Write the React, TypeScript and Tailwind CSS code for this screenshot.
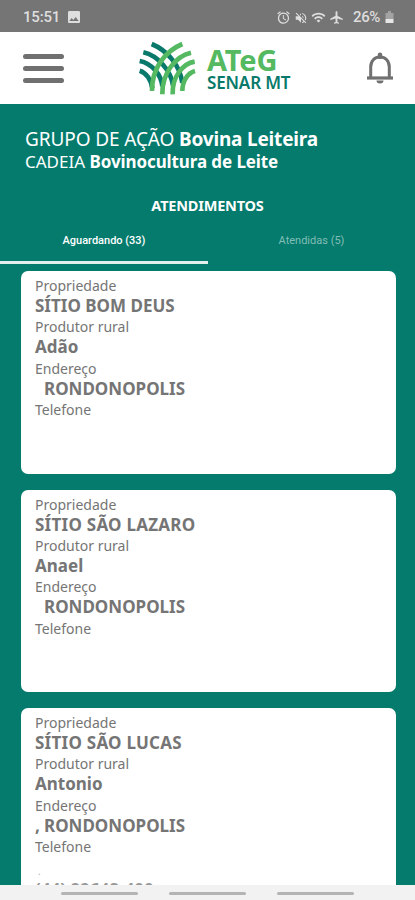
import {
	MdAirplanemodeActive,
	MdAlarm,
	MdImage,
	MdVolumeOff,
	MdWifi,
} from "react-icons/md";

type Visit = {
	property: string;
	producer: string;
	prefix: string;
	city: string;
	phone?: string;
};

const visits: Visit[] = [
	{
		property: "SÍTIO BOM DEUS",
		producer: "Adão",
		prefix: "",
		city: "RONDONOPOLIS",
	},
	{
		property: "SÍTIO SÃO LAZARO",
		producer: "Anael",
		prefix: "",
		city: "RONDONOPOLIS",
	},
	{
		property: "SÍTIO SÃO LUCAS",
		producer: "Antonio",
		prefix: ",",
		city: "RONDONOPOLIS",
		phone: "(44) 99648-400",
	},
];

const StatusBar = () => {
	return (
		<div className="flex h-8 shrink-0 items-center bg-[#757575] pt-[3px] pl-[23px] font-[Roboto,sans-serif] text-[15px] font-medium text-[#dedede]">
			<span className="w-[43px] tracking-[-0.2px]">15:51</span>
			<MdImage className="mb-[2px] h-[16px] w-[16px]" />
			<div className="ml-[194px] flex items-center">
				<MdAlarm className="h-[15px] w-[15px]" />
				<MdVolumeOff className="ml-[3px] h-[14px] w-[14px]" />
				<MdWifi className="ml-[3px] h-[15px] w-[15px]" />
				<MdAirplanemodeActive className="ml-[3px] h-[15px] w-[15px]" />
			</div>
			<span className="ml-[9px] w-[32px] tracking-[-0.4px]">26%</span>
			<svg className="mb-[2px] h-[12px] w-[9px]" viewBox="0 0 9 12">
				<path d="M3 0h3v2h2.500v6H.5V2H3z" fill="#a3a3a3" />
				<path d="M.5 8h8v4h-8z" fill="#e6e6e6" />
			</svg>
		</div>
	);
};

const Logo = () => {
	return (
		<svg
			className="h-[55px] w-[58px]"
			viewBox="25 16 174 165"
			fill="none"
			strokeWidth="14"
		>
			<g stroke="#08796a">
				<path d="M66 25C112 44 151 88 158 142" />
				<path d="M41 50C84 60 124 104 130 150" />
				<path d="M30 76C66 83 95 117 98 152" />
				<path d="M30 105C50 111 65 133 68 158" />
			</g>
			<g stroke="#55b961">
				<path d="M158 25C108 46 66 96 67 166" />
				<path d="M184 51C138 61 97 112 98 176" />
				<path d="M195 78C160 84 127 122 129 176" />
				<path d="M196 106C174 112 158 136 158 166" />
			</g>
		</svg>
	);
};

const Header = () => {
	return (
		<div className="flex h-[72px] shrink-0 items-center bg-white pl-[23px]">
			<div className="flex w-[41px] flex-col gap-[7px]">
				<span className="h-[5px] rounded-full bg-[#707070]" />
				<span className="h-[5px] rounded-full bg-[#707070]" />
				<span className="h-[5px] rounded-full bg-[#707070]" />
			</div>
			<div className="ml-[74px]">
				<Logo />
			</div>
			<div className="ml-[11px] w-[90px] pt-[2px] whitespace-nowrap">
				<div className="h-[27px] text-[29px] leading-[26px] font-bold tracking-[-0.200px] text-[#55b961]">
					ATeG
				</div>
				<div className="h-[17px] text-[17px] leading-[18px] font-semibold tracking-[-0.15px] text-[#08796a]">
					SENAR MT
				</div>
			</div>
			<svg
				className="ml-[69px] h-[32px] w-[28px]"
				viewBox="0 0 28 32"
				fill="none"
				stroke="#707070"
				strokeWidth="3"
			>
				<path d="M4.700 26V15C4.700 9 8.500 5 14 5s9.300 4 9.300 10v11" />
				<path d="M1 26h26" strokeWidth="3.200" />
				<path d="M14 2.700v2" strokeWidth="4.500" strokeLinecap="round" />
				<path d="M10.500 28.500h7a3.500 3 0 0 1-7 0z" fill="#707070" stroke="none" />
			</svg>
		</div>
	);
};

const VisitCard = ({ visit }: { visit: Visit }) => {
	return (
		<div className="h-[202.500px] shrink-0 overflow-hidden rounded-[7px] bg-white pt-[5px] pl-[14.500px] whitespace-nowrap text-[#757575]">
			<Field label="Propriedade">
				<span
					className={
						visit.property.includes("SÃO") ? "tracking-[0.250px]" : ""
					}
				>
					{visit.property}
				</span>
			</Field>
			<Field label="Produtor rural">{visit.producer}</Field>
			<Field label="Endereço">
				<span className="inline-block w-[9px]">{visit.prefix}</span>
				{visit.city}
			</Field>
			<Field label="Telefone">
				{visit.phone && (
					<>
						<div className="h-[23px] pl-[3px] text-[10px] leading-[28px] font-normal text-[#b5b5b5]">
							.
						</div>
						<div className="text-[#9a9a9a]">{visit.phone}</div>
					</>
				)}
			</Field>
		</div>
	);
};

const Field = ({
	label,
	children,
}: {
	label: string;
	children?: React.ReactNode;
}) => {
	return (
		<div className="h-[41.400px]">
			<div className="h-[20px] text-[14px] leading-[20px]">{label}</div>
			<div className="h-[20px] text-[17px] leading-[19px] font-bold">
				{children}
			</div>
		</div>
	);
};

const App = () => {
	return (
		<div className="flex h-[900px] w-[415px] flex-col overflow-hidden bg-[#047b6d] font-['Noto_Sans',sans-serif]">
			<StatusBar />
			<Header />
			<div className="flex h-[167px] shrink-0 flex-col whitespace-nowrap text-white">
				<div className="pt-[23px] pl-[25px]">
					<div className="text-[19px] leading-[24px] tracking-[-0.1px]">
						GRUPO DE AÇÃO{" "}
						<span className="font-bold tracking-[-0.200px]">Bovina Leiteira</span>
					</div>
					<div className="text-[17px] leading-[21px]">
						CADEIA{" "}
						<span className="font-bold tracking-[-0.100px]">
							Bovinocultura de Leite
						</span>
					</div>
				</div>
				<div className="mt-[23px] text-center text-[14.500px] leading-[20px] font-bold tracking-[-0.200px]">
					ATENDIMENTOS
				</div>
				<div className="mt-[14px] flex h-[35px] text-center font-[Roboto,sans-serif] text-[11px] leading-[23px]">
					<div className="w-[208px] border-b-[3px] border-[#e3efed] font-medium">
						Aguardando (33)
					</div>
					<div className="flex-1 text-[#82bdb6]">Atendidas (5)</div>
				</div>
			</div>
			<div className="flex min-h-0 flex-1 flex-col gap-[16px] overflow-hidden pr-[19px] pl-[20.500px]">
				{visits.map((visit) => (
					<VisitCard key={visit.property} visit={visit} />
				))}
			</div>
			<div className="flex h-[15px] shrink-0 gap-[31px] bg-[#f2f2f2] pt-[7px] pl-[61px]">
				<span className="h-[3px] w-[77px] rounded-full bg-[#b4b4b4]" />
				<span className="h-[3px] w-[77px] rounded-full bg-[#b4b4b4]" />
				<span className="h-[3px] w-[77px] rounded-full bg-[#b4b4b4]" />
			</div>
		</div>
	);
};

export default App;
